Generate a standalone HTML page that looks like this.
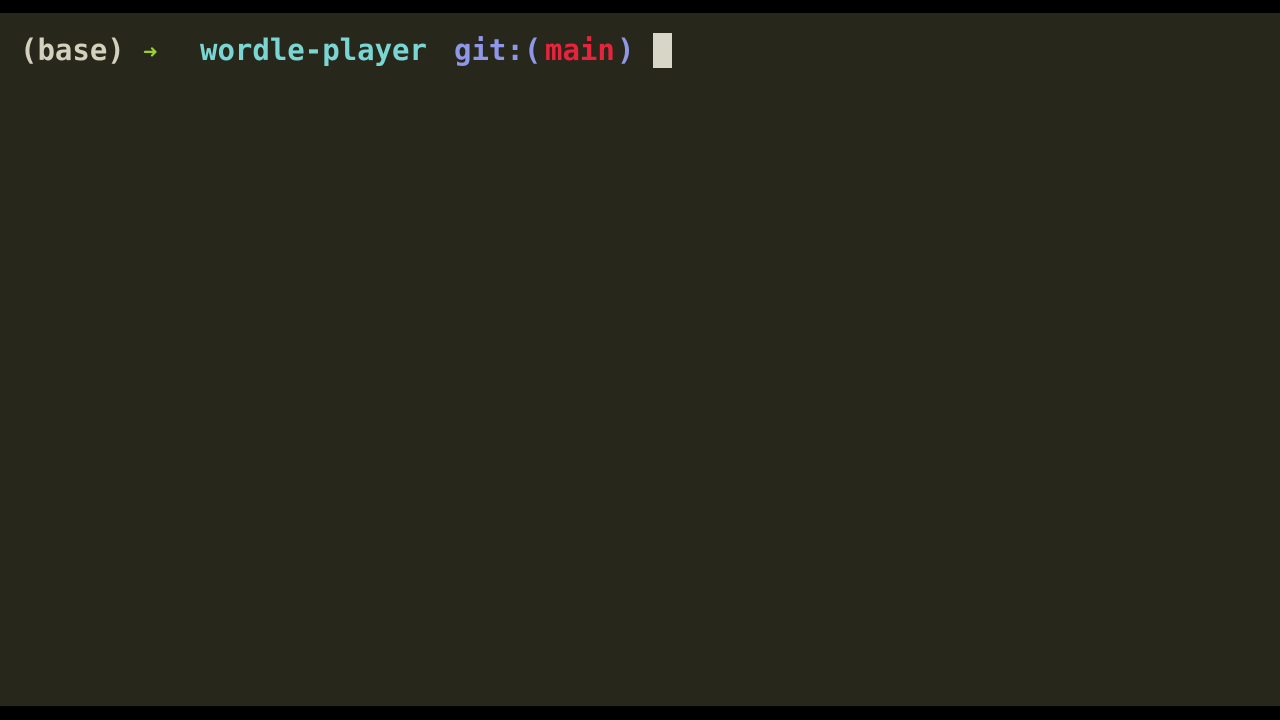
<!DOCTYPE html>
<html><head><style>
html,body{margin:0;padding:0;width:1280px;height:720px;overflow:hidden;background:#000}
.term{position:absolute;left:0;top:13px;width:1280px;height:693px;background:#27271c}
.t{position:absolute;top:32px;font-family:"DejaVu Sans Mono","Liberation Mono",monospace;font-size:29px;font-weight:bold;line-height:36px;white-space:pre}
.cur{position:absolute;left:653px;top:33px;width:19px;height:35px;background:#d8d6c6}
</style></head><body>
<div class="term"></div>
<div class="t" style="left:20px;color:#d4d0be">(base)</div>
<div class="t" style="left:143px;color:#9ad12a;font-size:24px;top:34px">➜</div>
<div class="t" style="left:200px;color:#79d6d2">wordle-player</div>
<div class="t" style="left:454px;color:#8f98e8">git:(</div>
<div class="t" style="left:545px;color:#e8243c">main</div>
<div class="t" style="left:617px;color:#8f98e8">)</div>
<div class="cur"></div>
</body></html>
